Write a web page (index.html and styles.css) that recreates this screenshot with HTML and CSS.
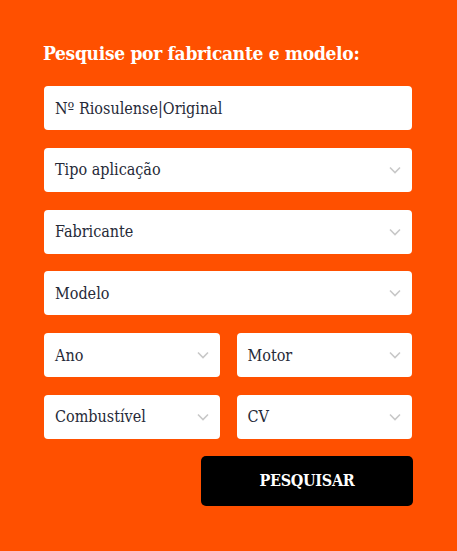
FILE: index.html
```html
<!DOCTYPE html>
<html lang="pt-BR">
<head>
    <meta charset="UTF-8">
    <meta name="viewport" content="width=device-width, initial-scale=1.0">
    <title>Pesquisa</title>
    <link rel="stylesheet" href="styles.css">
</head>
<body>
    <div class="search-panel">
        <h2 class="search-title">Pesquise por fabricante e modelo:</h2>
        <form class="search-form">
            <input type="text" class="field" value="Nº Riosulense|Original">
            <div class="field select"><span>Tipo aplicação</span><svg class="chevron" viewBox="0 0 12 8"><path d="M1 1.5l5 5 5-5"/></svg></div>
            <div class="field select"><span>Fabricante</span><svg class="chevron" viewBox="0 0 12 8"><path d="M1 1.5l5 5 5-5"/></svg></div>
            <div class="field select"><span>Modelo</span><svg class="chevron" viewBox="0 0 12 8"><path d="M1 1.5l5 5 5-5"/></svg></div>
            <div class="form-row">
                <div class="field select"><span>Ano</span><svg class="chevron" viewBox="0 0 12 8"><path d="M1 1.5l5 5 5-5"/></svg></div>
                <div class="field select"><span>Motor</span><svg class="chevron" viewBox="0 0 12 8"><path d="M1 1.5l5 5 5-5"/></svg></div>
            </div>
            <div class="form-row">
                <div class="field select"><span>Combustível</span><svg class="chevron" viewBox="0 0 12 8"><path d="M1 1.5l5 5 5-5"/></svg></div>
                <div class="field select"><span>CV</span><svg class="chevron" viewBox="0 0 12 8"><path d="M1 1.5l5 5 5-5"/></svg></div>
            </div>
            <div class="form-actions">
                <button type="button" class="btn-search">PESQUISAR</button>
            </div>
        </form>
    </div>
</body>
</html>
```

FILE: styles.css
```css
:root {
    --orange: #ff5000;
    --text: #262a38;
}

html, body {
    margin: 0;
    height: 100%;
    background: var(--orange);
}

body {
    font-family: "DejaVu Serif Condensed", "DejaVu Serif", serif;
}

.search-panel {
    padding: 40px 45px 0 44px;
}

.search-title {
    margin: 0 0 20px -1px;
    color: #fff;
    font-size: 19px;
    font-weight: bold;
    letter-spacing: -0.3px;
    line-height: 26px;
}

.search-form {
    display: flex;
    flex-direction: column;
    gap: 17.8px;
}

.field {
    box-sizing: border-box;
    height: 44px;
    width: 100%;
    background: #fff;
    border: none;
    border-radius: 4px;
    padding: 0 11px;
    font-family: inherit;
    font-size: 16px;
    color: var(--text);
    outline: none;
}

.select {
    display: flex;
    align-items: center;
    justify-content: space-between;
}

.chevron {
    width: 12px;
    height: 8px;
    fill: none;
    stroke: #c8c8c8;
    stroke-width: 1.6;
}

.form-row {
    display: grid;
    grid-template-columns: 1fr 1fr;
    gap: 17px;
}

.form-actions {
    display: flex;
    justify-content: flex-end;
    margin-top: -1px;
    margin-right: -1px;
}

.btn-search {
    width: 212px;
    height: 50px;
    background: #000;
    color: #fff;
    border: none;
    border-radius: 5px;
    font-family: inherit;
    font-size: 16px;
    font-weight: bold;
    letter-spacing: -0.3px;
    cursor: pointer;
}
```
